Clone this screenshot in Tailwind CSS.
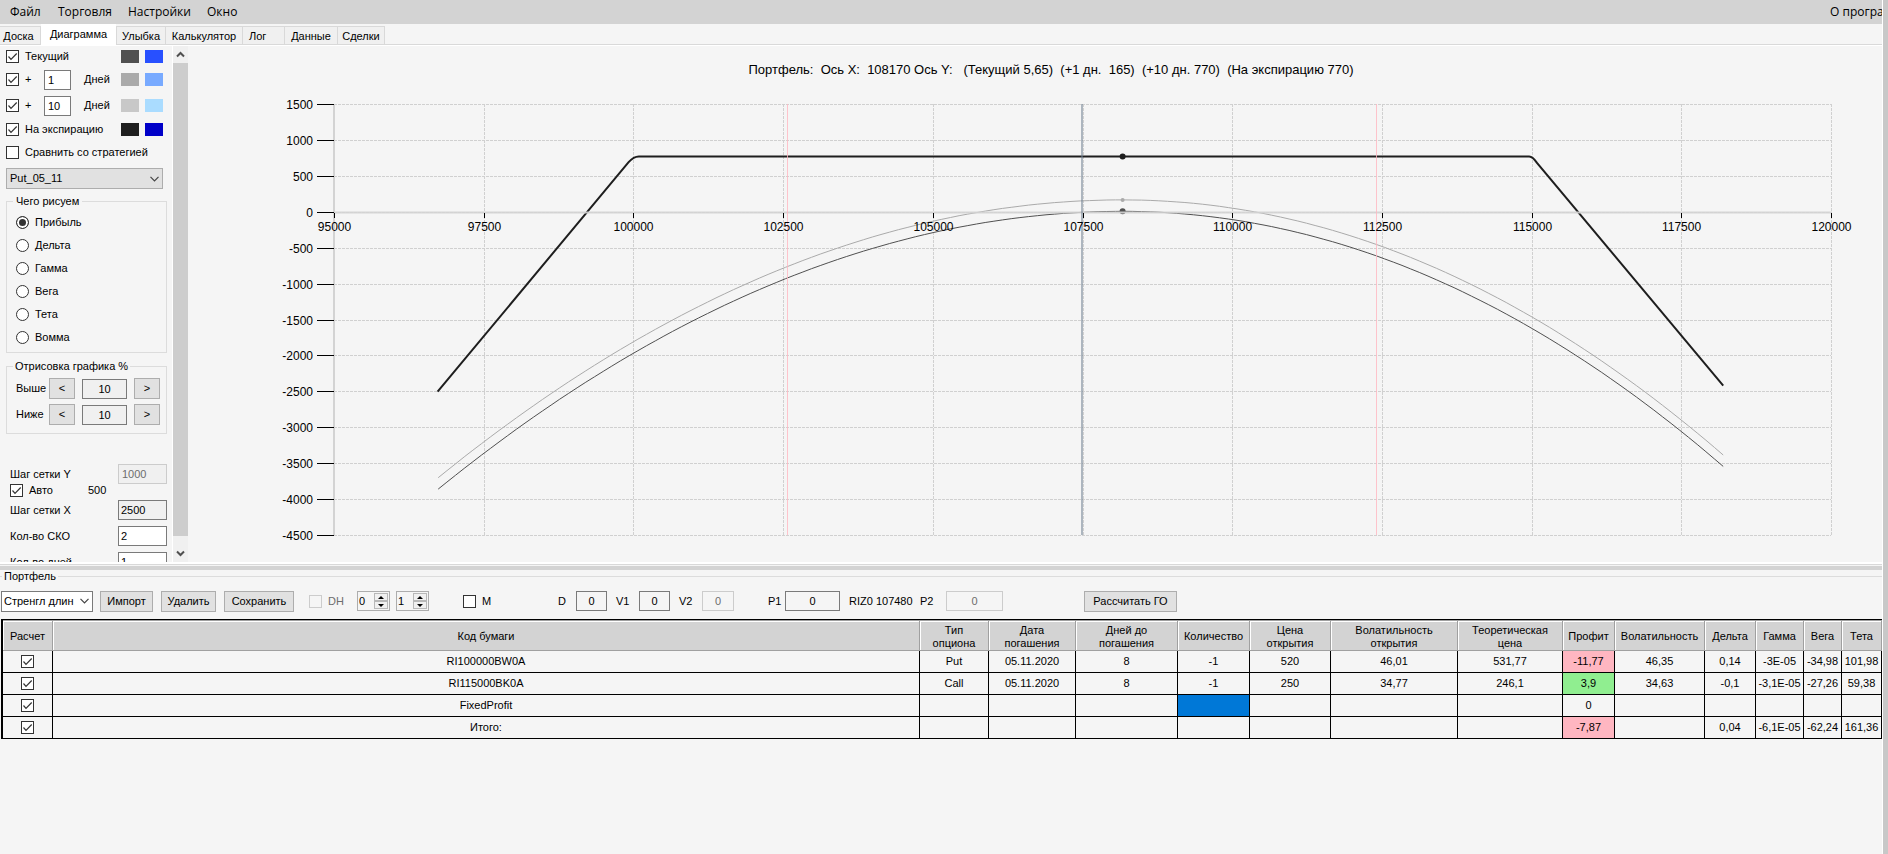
<!DOCTYPE html>
<html lang="ru">
<head>
  <meta charset="UTF-8">
  <meta name="viewport" content="width=device-width, initial-scale=1.0">
  <title>Портфель опционов</title>
  <script src="https://cdn.jsdelivr.net/npm/@tailwindcss/browser@4"></script>
</head>
<body class="flex h-screen overflow-hidden bg-[#f5f5f5] font-['Liberation_Sans',Arial,sans-serif] text-[11px] leading-[13px] text-black">
  <div class="flex min-w-0 flex-1 flex-col overflow-hidden">

    <!-- Menu -->
    <nav class="flex h-6 shrink-0 items-center overflow-hidden bg-[#d3d3d3] pb-[2px] pl-[10px] font-['Open_Sans','Noto_Sans',sans-serif] text-[12px] whitespace-nowrap">
      <a href="#" class="w-[48px]">Файл</a>
      <a href="#" class="w-[70px]">Торговля</a>
      <a href="#" class="w-[79px]">Настройки</a>
      <a href="#">Окно</a>
      <a href="#" class="ml-auto w-[52px] shrink-0">О программе</a>
    </nav>

    <!-- Tabs -->
    <div class="flex h-[22px] shrink-0 items-end border-b border-white bg-[linear-gradient(#f5f5f5_20px,#d9d9d9_20px)]">
      <button class="h-[19px] w-[41px] border border-l-0 border-[#d9d9d9] bg-[#f0f0f0] pt-[1px] pr-[3px]">Доска</button>
      <button class="h-[21px] w-[75px] bg-white">Диаграмма</button>
      <button class="h-[19px] w-[50px] border border-[#d9d9d9] bg-[#f0f0f0] pt-[1px]">Улыбка</button>
      <button class="h-[19px] w-[77px] border border-l-0 border-[#d9d9d9] bg-[#f0f0f0] pt-[1px]">Калькулятор</button>
      <button class="h-[19px] w-[42px] border border-l-0 border-[#d9d9d9] bg-[#f0f0f0] pt-[1px] pl-[6px] text-left">Лог</button>
      <button class="h-[19px] w-[53px] border border-l-0 border-[#d9d9d9] bg-[#f0f0f0] pt-[1px]">Данные</button>
      <button class="h-[19px] w-[47px] border border-l-0 border-[#d9d9d9] bg-[#f0f0f0] pt-[1px]">Сделки</button>
    </div>

    <!-- Diagram page -->
    <div class="flex min-h-0 flex-[516] overflow-hidden">
      <div class="w-[173px] shrink-0 overflow-hidden border-r border-white pl-[6px]">
        <div class="flex h-[21px] items-center">
          <label class="flex w-[115px] items-center gap-[6px]">
            <span class="grid">
              <input type="checkbox" checked class="peer col-start-1 row-start-1 size-[13px] appearance-none border border-[#333] bg-white">
              <svg class="pointer-events-none col-start-1 row-start-1 hidden size-[13px] peer-checked:block" viewBox="0 0 13 13"><path d="M2.5 6.5L5 9.3L10.7 3.5" fill="none" stroke="#333" stroke-width="1.2"/></svg>
            </span>
            Текущий
          </label>
          <button aria-label="Цвет 1" class="h-[13px] w-[18px] bg-[#505050]"></button>
          <button aria-label="Цвет 2" class="ml-[6px] h-[13px] w-[18px] bg-[#2850ff]"></button>
        </div>
        <div class="flex h-[25px] items-center">
          <label class="flex w-[38px] items-center gap-[6px]">
            <span class="grid">
              <input type="checkbox" checked class="peer col-start-1 row-start-1 size-[13px] appearance-none border border-[#333] bg-white">
              <svg class="pointer-events-none col-start-1 row-start-1 hidden size-[13px] peer-checked:block" viewBox="0 0 13 13"><path d="M2.5 6.5L5 9.3L10.7 3.5" fill="none" stroke="#333" stroke-width="1.2"/></svg>
            </span>
            +
          </label>
          <input id="days1" value="1" class="h-5 w-[27px] border border-[#7a7a7a] bg-white pl-[3px]">
          <label for="days1" class="ml-[13px] w-[37px]">Дней</label>
          <button aria-label="Цвет 1" class="h-[13px] w-[18px] bg-[#aaaaaa]"></button>
          <button aria-label="Цвет 2" class="ml-[6px] h-[13px] w-[18px] bg-[#78aaff]"></button>
        </div>
        <div class="flex h-[27px] items-center">
          <label class="flex w-[38px] items-center gap-[6px]">
            <span class="grid">
              <input type="checkbox" checked class="peer col-start-1 row-start-1 size-[13px] appearance-none border border-[#333] bg-white">
              <svg class="pointer-events-none col-start-1 row-start-1 hidden size-[13px] peer-checked:block" viewBox="0 0 13 13"><path d="M2.5 6.5L5 9.3L10.7 3.5" fill="none" stroke="#333" stroke-width="1.2"/></svg>
            </span>
            +
          </label>
          <input id="days2" value="10" class="h-5 w-[27px] border border-[#7a7a7a] bg-white pl-[3px]">
          <label for="days2" class="ml-[13px] w-[37px]">Дней</label>
          <button aria-label="Цвет 1" class="h-[13px] w-[18px] bg-[#c8c8c8]"></button>
          <button aria-label="Цвет 2" class="ml-[6px] h-[13px] w-[18px] bg-[#aadcff]"></button>
        </div>
        <div class="flex h-[21px] items-center">
          <label class="flex w-[115px] items-center gap-[6px]">
            <span class="grid">
              <input type="checkbox" checked class="peer col-start-1 row-start-1 size-[13px] appearance-none border border-[#333] bg-white">
              <svg class="pointer-events-none col-start-1 row-start-1 hidden size-[13px] peer-checked:block" viewBox="0 0 13 13"><path d="M2.5 6.5L5 9.3L10.7 3.5" fill="none" stroke="#333" stroke-width="1.2"/></svg>
            </span>
            На экспирацию
          </label>
          <button aria-label="Цвет 1" class="h-[13px] w-[18px] bg-[#1e1e1e]"></button>
          <button aria-label="Цвет 2" class="ml-[6px] h-[13px] w-[18px] bg-[#0000c8]"></button>
        </div>
        <label class="flex h-[25px] items-center gap-[6px] whitespace-nowrap">
          <input type="checkbox" class="size-[13px] appearance-none border border-[#333] bg-white">
          Сравнить со стратегией
        </label>
        <div class="mt-[3px] grid w-[157px]">
          <select aria-label="Стратегия" class="col-start-1 row-start-1 h-[21px] appearance-none border border-[#adadad] bg-[#e1e1e1] pl-[3px]">
            <option>Put_05_11</option>
          </select>
          <svg class="pointer-events-none col-start-1 row-start-1 mr-1 h-[6px] w-[9px] self-center justify-self-end" viewBox="0 0 9 6"><path d="M0.5 0.8L4.5 4.8L8.5 0.8" fill="none" stroke="#444" stroke-width="1.2"/></svg>
        </div>

        <!-- What to draw -->
        <fieldset class="mt-[5px] w-[161px] border border-[#dcdcdc] pt-[3px] pb-[3px] pl-[9px]">
          <legend class="-ml-[3px] px-[3px] leading-[14px]">Чего рисуем</legend>
          <label class="flex h-[23px] items-center gap-[6px]"><input type="radio" name="greek" checked class="size-[13px] appearance-none rounded-full border border-[#333] bg-white checked:bg-[#333] checked:shadow-[inset_0_0_0_2px_white]">Прибыль</label>
          <label class="flex h-[23px] items-center gap-[6px]"><input type="radio" name="greek" class="size-[13px] appearance-none rounded-full border border-[#333] bg-white checked:bg-[#333] checked:shadow-[inset_0_0_0_2px_white]">Дельта</label>
          <label class="flex h-[23px] items-center gap-[6px]"><input type="radio" name="greek" class="size-[13px] appearance-none rounded-full border border-[#333] bg-white checked:bg-[#333] checked:shadow-[inset_0_0_0_2px_white]">Гамма</label>
          <label class="flex h-[23px] items-center gap-[6px]"><input type="radio" name="greek" class="size-[13px] appearance-none rounded-full border border-[#333] bg-white checked:bg-[#333] checked:shadow-[inset_0_0_0_2px_white]">Вега</label>
          <label class="flex h-[23px] items-center gap-[6px]"><input type="radio" name="greek" class="size-[13px] appearance-none rounded-full border border-[#333] bg-white checked:bg-[#333] checked:shadow-[inset_0_0_0_2px_white]">Тета</label>
          <label class="flex h-[23px] items-center gap-[6px]"><input type="radio" name="greek" class="size-[13px] appearance-none rounded-full border border-[#333] bg-white checked:bg-[#333] checked:shadow-[inset_0_0_0_2px_white]">Вомма</label>
        </fieldset>

        <!-- Chart range -->
        <fieldset class="mt-[6px] w-[161px] border border-[#dcdcdc] pt-[5px] pb-2 pl-[9px]">
          <legend class="-ml-[3px] px-[2px] leading-[14px]">Отрисовка графика %</legend>
          <div class="flex items-center">
            <label for="above" class="w-[33px]">Выше</label>
            <button class="h-[21px] w-[26px] border border-[#adadad] bg-[#e1e1e1]">&lt;</button>
            <input id="above" value="10" readonly class="ml-[7px] h-5 w-[45px] border border-[#7a7a7a] bg-[#f0f0f0] text-center">
            <button class="ml-[7px] h-[21px] w-[26px] border border-[#adadad] bg-[#e1e1e1]">&gt;</button>
          </div>
          <div class="mt-[5px] flex items-center">
            <label for="below" class="w-[33px]">Ниже</label>
            <button class="h-[21px] w-[26px] border border-[#adadad] bg-[#e1e1e1]">&lt;</button>
            <input id="below" value="10" readonly class="ml-[7px] h-5 w-[45px] border border-[#7a7a7a] bg-[#f0f0f0] text-center">
            <button class="ml-[7px] h-[21px] w-[26px] border border-[#adadad] bg-[#e1e1e1]">&gt;</button>
          </div>
        </fieldset>

        <!-- Grid settings -->
        <div class="mt-[30px] w-[161px] pl-1">
          <div class="flex items-center justify-between">
            <label for="stepY">Шаг сетки Y</label>
            <input id="stepY" value="1000" disabled class="h-5 w-[49px] border border-[#cccccc] bg-[#f0f0f0] pl-[3px] text-[#6d6d6d]">
          </div>
          <div class="flex h-[13px] items-center">
            <label class="flex w-[78px] items-center gap-[6px]">
              <span class="grid">
                <input type="checkbox" checked class="peer col-start-1 row-start-1 size-[13px] appearance-none border border-[#333] bg-white">
                <svg class="pointer-events-none col-start-1 row-start-1 hidden size-[13px] peer-checked:block" viewBox="0 0 13 13"><path d="M2.5 6.5L5 9.3L10.7 3.5" fill="none" stroke="#333" stroke-width="1.2"/></svg>
              </span>
              Авто
            </label>
            <span>500</span>
          </div>
          <div class="mt-[3px] flex items-center justify-between">
            <label for="stepX">Шаг сетки X</label>
            <input id="stepX" value="2500" readonly class="h-5 w-[49px] border border-[#7a7a7a] bg-[#f0f0f0] pl-[2px]">
          </div>
          <div class="mt-[6px] flex items-center justify-between">
            <label for="sko">Кол-во СКО</label>
            <input id="sko" value="2" class="h-5 w-[49px] border border-[#7a7a7a] bg-white pl-[2px]">
          </div>
          <div class="mt-[6px] flex items-center justify-between">
            <label for="skoDays">Кол-во дней</label>
            <input id="skoDays" value="1" class="h-5 w-[49px] border border-[#7a7a7a] bg-white pl-[2px]">
          </div>
        </div>
      </div>

      <!-- Scrollbar -->
      <div class="flex w-[15px] shrink-0 flex-col bg-[#f0f0f0]">
        <button aria-label="Вверх" class="grid h-[17px] place-items-center"><svg width="9" height="7" viewBox="0 0 9 7"><path d="M1 5.5L4.5 2L8 5.5" fill="none" stroke="#505050" stroke-width="2"/></svg></button>
        <div class="flex-1 bg-[#cdcdcd]"></div>
        <button aria-label="Вниз" class="mt-[9px] grid h-[17px] place-items-center"><svg width="9" height="7" viewBox="0 0 9 7"><path d="M1 1.5L4.5 5L8 1.5" fill="none" stroke="#505050" stroke-width="2"/></svg></button>
      </div>

      <div class="min-w-0 flex-1">
        <svg id="chart" class="block h-full w-full" viewBox="188 46 1694 516"></svg>
      </div>
    </div>

    <!-- Splitter -->
    <div class="h-2 shrink-0 border-t-2 border-white">
      <div class="h-[2px] border-t border-[#d9d9d9]"></div>
      <div class="h-1 bg-[#d3d3d3]"></div>
    </div>

    <!-- Portfolio -->
    <fieldset class="min-h-0 min-w-0 flex-[283] border-t border-[#dcdcdc]">
      <legend class="ml-[2px] px-[2px]">Портфель</legend>
      <div class="flex h-9 items-center pl-[1px] whitespace-nowrap">
        <div class="grid w-[92px]">
          <select aria-label="Портфель" class="col-start-1 row-start-1 h-[21px] appearance-none border border-[#7a7a7a] bg-white pl-[2px]">
            <option>Стренгл длин</option>
          </select>
          <svg class="pointer-events-none col-start-1 row-start-1 mr-1 h-[6px] w-[9px] self-center justify-self-end" viewBox="0 0 9 6"><path d="M0.5 0.8L4.5 4.8L8.5 0.8" fill="none" stroke="#444" stroke-width="1.2"/></svg>
        </div>
        <button class="ml-[7px] h-[21px] w-[53px] border border-[#adadad] bg-[#e1e1e1]">Импорт</button>
        <button class="ml-2 h-[21px] w-[55px] border border-[#adadad] bg-[#e1e1e1]">Удалить</button>
        <button class="ml-2 h-[21px] w-[70px] border border-[#adadad] bg-[#e1e1e1]">Сохранить</button>
        <label class="ml-[15px] flex w-12 items-center gap-[6px] text-[#6d6d6d]">
          <input type="checkbox" disabled class="size-[13px] appearance-none border border-[#cccccc]">DH
        </label>
        <div class="flex h-5 w-[33px] border border-[#adadad]">
          <input aria-label="DH 1" value="0" class="w-[15px] pl-[1px]">
          <div class="flex flex-1 flex-col p-[1px]">
            <button aria-label="Больше" class="grid flex-1 place-items-center border border-[#b8b8b8] bg-[#f0f0f0]"><svg width="6" height="3" viewBox="0 0 6 3"><path d="M0 3L3 0L6 3Z"/></svg></button>
            <button aria-label="Меньше" class="grid flex-1 place-items-center border border-[#b8b8b8] bg-[#f0f0f0]"><svg width="6" height="3" viewBox="0 0 6 3"><path d="M0 0L3 3L6 0Z"/></svg></button>
          </div>
        </div>
        <div class="ml-[6px] flex h-5 w-[33px] border border-[#adadad]">
          <input aria-label="DH 2" value="1" class="w-[15px] pl-[1px]">
          <div class="flex flex-1 flex-col p-[1px]">
            <button aria-label="Больше" class="grid flex-1 place-items-center border border-[#b8b8b8] bg-[#f0f0f0]"><svg width="6" height="3" viewBox="0 0 6 3"><path d="M0 3L3 0L6 3Z"/></svg></button>
            <button aria-label="Меньше" class="grid flex-1 place-items-center border border-[#b8b8b8] bg-[#f0f0f0]"><svg width="6" height="3" viewBox="0 0 6 3"><path d="M0 0L3 3L6 0Z"/></svg></button>
          </div>
        </div>
        <label class="ml-[34px] flex w-[95px] items-center gap-[6px]">
          <input type="checkbox" class="size-[13px] appearance-none border border-[#333] bg-white">M
        </label>
        <label for="d" class="w-[18px]">D</label>
        <input id="d" value="0" class="h-5 w-[31px] border border-[#7a7a7a] text-center">
        <label for="v1" class="ml-[9px] w-[23px]">V1</label>
        <input id="v1" value="0" class="h-5 w-[31px] border border-[#7a7a7a] text-center">
        <label for="v2" class="ml-[9px] w-[23px]">V2</label>
        <input id="v2" value="0" disabled class="h-5 w-8 border border-[#cccccc] text-center text-[#6d6d6d]">
        <label for="p1" class="ml-[34px] w-[17px]">P1</label>
        <input id="p1" value="0" class="h-5 w-[55px] border border-[#7a7a7a] text-center">
        <span class="ml-[9px] w-[71px]">RIZ0 107480</span>
        <label for="p2" class="w-[26px]">P2</label>
        <input id="p2" value="0" disabled class="h-5 w-[57px] border border-[#cccccc] text-center text-[#6d6d6d]">
        <button class="ml-[81px] h-[21px] w-[93px] border border-[#adadad] bg-[#e1e1e1]">Рассчитать ГО</button>
      </div>

      <div class="ml-[1px] border-t border-l-2 border-black">
        <table class="w-full table-fixed border-separate border-spacing-0 text-center">
          <colgroup>
            <col class="w-[50px]"><col><col class="w-[69px]"><col class="w-[87px]"><col class="w-[102px]">
            <col class="w-[72px]"><col class="w-[81px]"><col class="w-[127px]"><col class="w-[105px]"><col class="w-[52px]">
            <col class="w-[90px]"><col class="w-[51px]"><col class="w-[48px]"><col class="w-[38px]"><col class="w-[40px]">
          </colgroup>
          <thead><tr id="portfolio-head"></tr></thead>
          <tbody id="portfolio-rows"></tbody>
        </table>
      </div>
    </fieldset>
  </div>

  <div class="w-[6px] shrink-0 border-l border-white bg-[#c8c8c8]"></div>

  <script>
    // Portfolio table
    const columns = ['Расчет', 'Код бумаги', 'Тип<br>опциона', 'Дата<br>погашения', 'Дней до<br>погашения', 'Количество', 'Цена<br>открытия',
      'Волатильность<br>открытия', 'Теоретическая<br>цена', 'Профит', 'Волатильность', 'Дельта', 'Гамма', 'Вега', 'Тета'];

    const positions = [
      ['RI100000BW0A', 'Put', '05.11.2020', '8', '-1', '520', '46,01', '531,77', '-11,77', '46,35', '0,14', '-3E-05', '-34,98', '101,98'],
      ['RI115000BK0A', 'Call', '05.11.2020', '8', '-1', '250', '34,77', '246,1', '3,9', '34,63', '-0,1', '-3,1E-05', '-27,26', '59,38'],
      ['FixedProfit', '', '', '', '', '', '', '', '0', '', '', '', '', ''],
      ['Итого:', '', '', '', '', '', '', '', '-7,87', '', '0,04', '-6,1E-05', '-62,24', '161,36']
    ];

    document.getElementById('portfolio-head').innerHTML = columns.map(name =>
      `<th class="h-[31px] border-t border-r border-b border-[#a0a0a0] bg-[#d3d3d3] p-0 pt-[2px] font-normal shadow-[inset_1px_1px_0_white]">${name}</th>`
    ).join('');

    function cellColor(row, col) {
      if (row === 2 && col === 4) return 'bg-[#0078d7]';
      if (col !== 8) return '';
      const value = parseFloat(positions[row][col].replace(',', '.'));
      return value < 0 ? 'bg-[#ffb6c1]' : value > 0 ? 'bg-[#90ee90]' : '';
    }

    document.getElementById('portfolio-rows').innerHTML = positions.map((cells, row) => `
      <tr>
        <td class="h-[22px] border-r border-b border-black p-0">
          <span class="inline-grid align-middle">
            <input type="checkbox" checked aria-label="Расчет ${cells[0]}" class="peer col-start-1 row-start-1 size-[13px] appearance-none border border-[#333] bg-white">
            <svg class="pointer-events-none col-start-1 row-start-1 hidden size-[13px] peer-checked:block" viewBox="0 0 13 13"><path d="M2.5 6.5L5 9.3L10.7 3.5" fill="none" stroke="#333" stroke-width="1.2"/></svg>
          </span>
        </td>
        ${cells.map((text, col) => `<td class="h-[22px] border-r border-b border-black p-0 ${cellColor(row, col)}">${text}</td>`).join('')}
      </tr>`).join('');

    // Chart
    const plot = { left: 334, right: 1831, top: 104, bottom: 535, minX: 95000, maxX: 120000, minY: -4500, maxY: 1500 };
    const center = 108170;
    const px = x => plot.left + (x - plot.minX) / (plot.maxX - plot.minX) * (plot.right - plot.left);
    const py = y => plot.top + (plot.maxY - y) / (plot.maxY - plot.minY) * (plot.bottom - plot.top);
    const snap = v => Math.round(v) + 0.5;

    function curve(peak) {
      const points = [];
      for (let x = 96740; x <= 118200; x += 145) {
        const d = x - center;
        const k = d < 0 ? 2.96e-5 : 3.4e-5 + 1.3e-6 * d / 10020;
        points.push(`${px(x).toFixed(1)},${py(peak - k * d * d).toFixed(1)}`);
      }
      return points.join(' ');
    }

    let grid = '', ticks = '', labels = '';
    for (let x = plot.minX; x <= plot.maxX; x += 2500) {
      const X = snap(px(x));
      grid += `<line x1="${X}" y1="${plot.top}" x2="${X}" y2="${plot.bottom}"/>`;
      ticks += `<line x1="${X}" y1="213" x2="${X}" y2="218"/>`;
      labels += `<text x="${X}" y="231" text-anchor="middle">${x}</text>`;
    }
    for (let y = plot.minY; y <= plot.maxY; y += 500) {
      const Y = snap(py(y));
      grid += `<line x1="${plot.left}" y1="${Y}" x2="${plot.right}" y2="${Y}"/>`;
      ticks += `<line x1="317" y1="${Y}" x2="334" y2="${Y}"/>`;
      labels += `<text x="313" y="${Y + 4}" text-anchor="end">${y}</text>`;
    }

    const expiry = `M${px(96730)} ${py(-2505)}L${px(99920)} ${py(690)}Q${px(100010)} ${py(775)} ${px(100100)} ${py(770)}` +
      `H${px(114960)}Q${px(115020)} ${py(770)} ${px(115090)} ${py(680)}L${px(118200)} ${py(-2420)}`;

    document.getElementById('chart').innerHTML = `
      <g stroke="#d0d0d0" stroke-dasharray="3 1">${grid}</g>
      <line x1="334" y1="104" x2="334" y2="536" stroke="#d3d3d3" stroke-width="2"/>
      <path d="${expiry}" fill="none" stroke="#1e1e1e" stroke-width="2"/>
      <polyline points="${curve(165)}" fill="none" stroke="#aaaaaa"/>
      <polyline points="${curve(5.65)}" fill="none" stroke="#505050"/>
      <circle cx="${px(center)}" cy="${py(770)}" r="3" fill="#1e1e1e"/>
      <circle cx="${px(center)}" cy="${py(165)}" r="2" fill="#aaaaaa"/>
      <circle cx="${px(center)}" cy="${py(5.65)}" r="3" fill="#505050"/>
      <line x1="334" y1="212.5" x2="1832" y2="212.5" stroke="#d3d3d3" stroke-opacity="0.9" stroke-width="2"/>
      <g stroke="#ffb6c1" stroke-opacity="0.8">
        <line x1="787.5" y1="104" x2="787.5" y2="535"/>
        <line x1="1376.5" y1="104" x2="1376.5" y2="535"/>
      </g>
      <line x1="1082" y1="104" x2="1082" y2="535" stroke="#708090" stroke-opacity="0.55" stroke-width="2"/>
      <g stroke="#000">${ticks}</g>
      <g font-size="12">${labels}</g>
      <text x="1051" y="74" text-anchor="middle" font-size="13" xml:space="preserve">Портфель:  Ось X:  108170 Ось Y:   (Текущий 5,65)  (+1 дн.  165)  (+10 дн. 770)  (На экспирацию 770)</text>`;
  </script>
</body>
</html>
